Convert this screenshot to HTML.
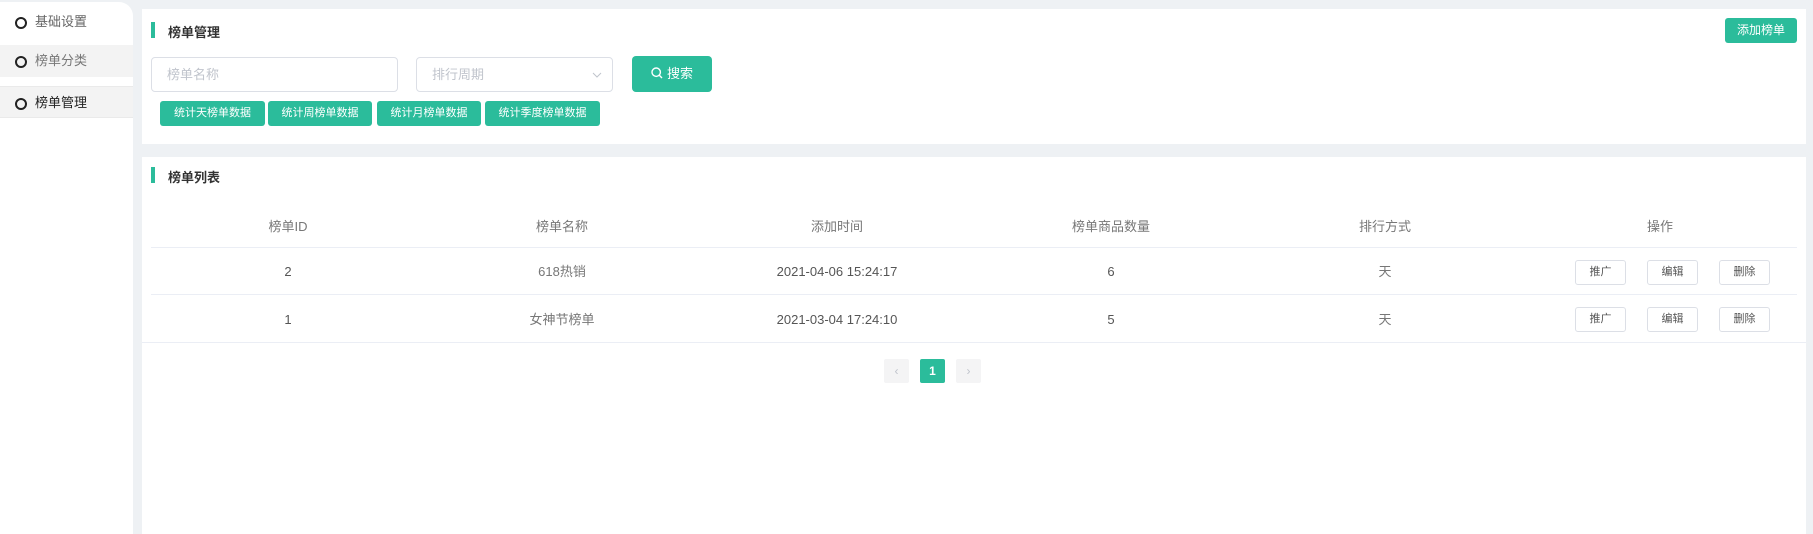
<!DOCTYPE html>
<html><head><meta charset="utf-8"><style>
*{box-sizing:border-box;margin:0;padding:0}
body{width:1813px;height:534px;background:#eef1f4;font-family:"Liberation Sans","Noto Sans CJK SC",sans-serif;position:relative;overflow:hidden;color:#555}
.side{position:absolute;left:0;top:2px;width:133px;height:532px;background:#fff;border-radius:0 14px 0 0}
.it{position:absolute;left:0;width:133px;height:32px;font-size:13px;line-height:32px;padding-left:35px;color:#666}
.it:before{content:"";position:absolute;left:15px;top:11px;width:8px;height:8px;border:2px solid #222;border-radius:50%}
.card{position:absolute;left:142px;width:1664px;background:#fff}
.bar{position:absolute;left:9px;width:4px;height:16px;background:#2bbc9b}
.tt{position:absolute;left:26px;font-size:13px;font-weight:bold;color:#333}
.btn{position:absolute;background:#2bbc9b;color:#fff;border-radius:3px;font-size:11px;text-align:center}
.inp{position:absolute;border:1px solid #dcdfe6;border-radius:4px;font-size:13px;color:#c0c4cc;padding-left:15px;line-height:34px}
.row{position:absolute;left:9px;width:1646px;border-bottom:1px solid #ebeef5;font-size:13px}
.c{position:absolute;width:274px;text-align:center;top:0}
.ob{position:absolute;width:51px;height:25px;border:1px solid #dcdfe6;border-radius:3px;font-size:11px;text-align:center;line-height:23px;color:#555;background:#fff}
.pg{position:absolute;top:359px;width:25px;height:24px;background:#f4f4f5;color:#c0c4cc;text-align:center;line-height:24px;font-size:12px;border-radius:2px}
</style></head><body>
<div class="side">
<div class="it" style="top:4px">基础设置</div>
<div class="it" style="top:43px;background:#f3f3f3;color:#777">榜单分类</div>
<div class="it" style="top:84px;background:#f3f3f3;color:#222;border-top:1px solid #eaeaea;border-bottom:1px solid #eaeaea">榜单管理</div>
</div>
<div class="card" style="top:9px;height:135px">
<div class="bar" style="top:13px"></div>
<div class="tt" style="top:13px">榜单管理</div>
<div class="btn" style="left:1583px;top:9px;width:72px;height:25px;line-height:25px;font-size:12px">添加榜单</div>
<div class="inp" style="left:9px;top:48px;width:247px;height:35px">榜单名称</div>
<div class="inp" style="left:274px;top:48px;width:197px;height:35px">排行周期<svg style="position:absolute;right:10px;top:14px" width="10" height="6" viewBox="0 0 10 6"><path d="M1 1L5 5L9 1" fill="none" stroke="#c0c4cc" stroke-width="1"/></svg></div>
<div class="btn" style="left:490px;top:47px;width:80px;height:36px;line-height:36px;font-size:13px;border-radius:4px"><svg width="12" height="12" viewBox="0 0 12 12" style="vertical-align:-1px;margin-right:4px"><circle cx="5.2" cy="5.2" r="4.2" fill="none" stroke="#fff" stroke-width="1.4"/><path d="M8.3 8.3L11 11" stroke="#fff" stroke-width="1.4"/></svg>搜索</div>
<div class="btn" style="left:18px;top:92px;width:105px;height:25px;line-height:25px">统计天榜单数据</div>
<div class="btn" style="left:126px;top:92px;width:104px;height:25px;line-height:25px">统计周榜单数据</div>
<div class="btn" style="left:235px;top:92px;width:104px;height:25px;line-height:25px">统计月榜单数据</div>
<div class="btn" style="left:343px;top:92px;width:115px;height:25px;line-height:25px">统计季度榜单数据</div>
</div>
<div class="card" style="top:157px;height:377px">
<div class="bar" style="top:10px"></div>
<div class="tt" style="top:10px">榜单列表</div>
</div>
<div class="row" style="top:200px;height:48px;line-height:54px;left:151px;color:#777">
<div class="c" style="left:0">榜单ID</div><div class="c" style="left:274px">榜单名称</div><div class="c" style="left:549px">添加时间</div><div class="c" style="left:823px">榜单商品数量</div><div class="c" style="left:1097px">排行方式</div><div class="c" style="left:1372px">操作</div></div>
<div class="row" style="top:248px;height:47px;line-height:47px;left:151px">
<div class="c" style="left:0">2</div><div class="c" style="left:274px;color:#777">618热销</div><div class="c" style="left:549px">2021-04-06 15:24:17</div><div class="c" style="left:823px">6</div><div class="c" style="left:1097px;color:#777">天</div>
<div class="ob" style="left:1424px;top:12px">推广</div><div class="ob" style="left:1496px;top:12px">编辑</div><div class="ob" style="left:1568px;top:12px">删除</div></div>
<div class="row" style="top:295px;height:48px;line-height:50px;left:142px;width:1664px">
<div class="c" style="left:9px">1</div><div class="c" style="left:283px;color:#777">女神节榜单</div><div class="c" style="left:558px">2021-03-04 17:24:10</div><div class="c" style="left:832px">5</div><div class="c" style="left:1106px;color:#777">天</div>
<div class="ob" style="left:1433px;top:12px">推广</div><div class="ob" style="left:1505px;top:12px">编辑</div><div class="ob" style="left:1577px;top:12px">删除</div></div>
<div class="pg" style="left:884px">‹</div>
<div class="pg" style="left:920px;background:#2bbc9b;color:#fff;font-weight:bold">1</div>
<div class="pg" style="left:956px">›</div>
</body></html>
